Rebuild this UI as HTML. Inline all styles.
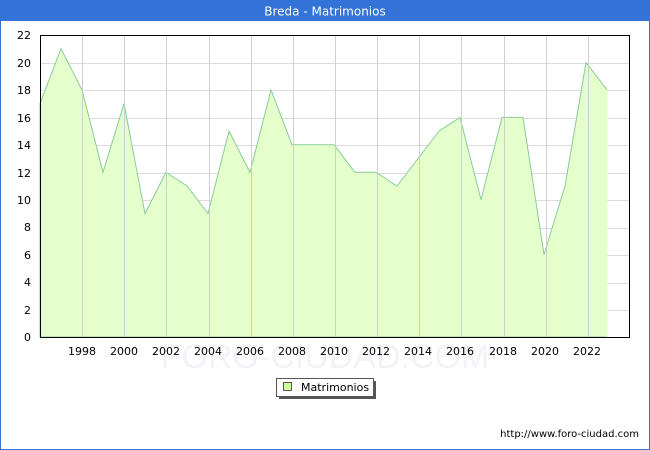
<!DOCTYPE html>
<html><head><meta charset="utf-8"><style>
html,body{margin:0;padding:0;background:#fff}
body{width:650px;height:450px;position:relative;overflow:hidden;font-family:"DejaVu Sans","Liberation Sans",sans-serif}
</style></head><body>
<svg width="650" height="450" viewBox="0 0 650 450" xmlns="http://www.w3.org/2000/svg" style="position:absolute;left:0;top:0">
<rect x="0" y="0" width="650" height="450" fill="#fff"/>
<rect x="0.5" y="0.5" width="649" height="449" fill="none" stroke="#3372d6"/>
<rect x="0" y="0" width="650" height="21" fill="#3372d6"/>
<text x="325" y="15.5" text-anchor="middle" font-size="12" fill="#fff">Breda - Matrimonios</text>
<g stroke="#dcdcdc" stroke-width="1">
<line x1="40" x2="630" y1="310.5" y2="310.5"/><line x1="40" x2="630" y1="283.5" y2="283.5"/>
<line x1="40" x2="630" y1="255.5" y2="255.5"/><line x1="40" x2="630" y1="228.5" y2="228.5"/>
<line x1="40" x2="630" y1="200.5" y2="200.5"/><line x1="40" x2="630" y1="173.5" y2="173.5"/>
<line x1="40" x2="630" y1="145.5" y2="145.5"/><line x1="40" x2="630" y1="118.5" y2="118.5"/>
<line x1="40" x2="630" y1="90.5" y2="90.5"/><line x1="40" x2="630" y1="63.5" y2="63.5"/>
</g>
<polygon fill="#e5ffcc" stroke="#88cc99" stroke-width="1" points="40,337 40,103.6 61,48.7 82,89.9 103,172.3 124,103.6 145,213.5 166,172.3 187,186 208,213.5 229,131.1 250,172.3 271,89.9 292,144.8 313,144.8 334,144.8 355,172.3 376,172.3 397,186 418,158.5 439,131.1 460,117.4 481,199.7 502,117.4 523,117.4 544,254.6 565,186 586,62.5 607,89.9 607,337"/>
<line x1="607" x2="607" y1="90" y2="337" stroke="#e5ffcc" stroke-width="1"/>
<g stroke="#cccccc" stroke-width="1" opacity="0.9">
<line x1="82.5" x2="82.5" y1="35" y2="337"/><line x1="124.5" x2="124.5" y1="35" y2="337"/>
<line x1="166.5" x2="166.5" y1="35" y2="337"/><line x1="209.5" x2="209.5" y1="35" y2="337"/>
<line x1="251.5" x2="251.5" y1="35" y2="337"/><line x1="293.5" x2="293.5" y1="35" y2="337"/>
<line x1="335.5" x2="335.5" y1="35" y2="337"/><line x1="377.5" x2="377.5" y1="35" y2="337"/>
<line x1="419.5" x2="419.5" y1="35" y2="337"/><line x1="461.5" x2="461.5" y1="35" y2="337"/>
<line x1="504.5" x2="504.5" y1="35" y2="337"/><line x1="546.5" x2="546.5" y1="35" y2="337"/>
<line x1="588.5" x2="588.5" y1="35" y2="337"/>
</g>
<rect x="40.5" y="35.5" width="589" height="302" fill="none" stroke="#000"/>
<text x="325" y="368" text-anchor="middle" font-size="34" fill="#f2f2f8" font-family="Liberation Sans,sans-serif">FORO-CIUDAD.COM</text>
<g font-size="11" fill="#000" text-anchor="end">
<text x="31" y="341">0</text><text x="31" y="314">2</text><text x="31" y="286">4</text>
<text x="31" y="259">6</text><text x="31" y="231">8</text><text x="31" y="204">10</text>
<text x="31" y="177">12</text><text x="31" y="149">14</text><text x="31" y="122">16</text>
<text x="31" y="94">18</text><text x="31" y="67">20</text><text x="31" y="39">22</text>
</g>
<g font-size="11" fill="#000" text-anchor="middle">
<text x="82" y="355">1998</text><text x="124" y="355">2000</text><text x="166" y="355">2002</text>
<text x="208" y="355">2004</text><text x="250" y="355">2006</text><text x="292" y="355">2008</text>
<text x="334" y="355">2010</text><text x="376" y="355">2012</text><text x="418" y="355">2014</text>
<text x="460" y="355">2016</text><text x="503" y="355">2018</text><text x="545" y="355">2020</text>
<text x="587" y="355">2022</text>
</g>
<rect x="279" y="381" width="97" height="18" fill="#555"/>
<rect x="276.5" y="378.5" width="97" height="18" fill="#fff" stroke="#555"/>
<rect x="283.5" y="382.5" width="8" height="8" fill="#ccff99" stroke="#555"/>
<text x="301" y="391" font-size="11" fill="#000">Matrimonios</text>
<text x="639" y="437" text-anchor="end" font-size="10" fill="#000">http://www.foro-ciudad.com</text>
</svg>
</body></html>
